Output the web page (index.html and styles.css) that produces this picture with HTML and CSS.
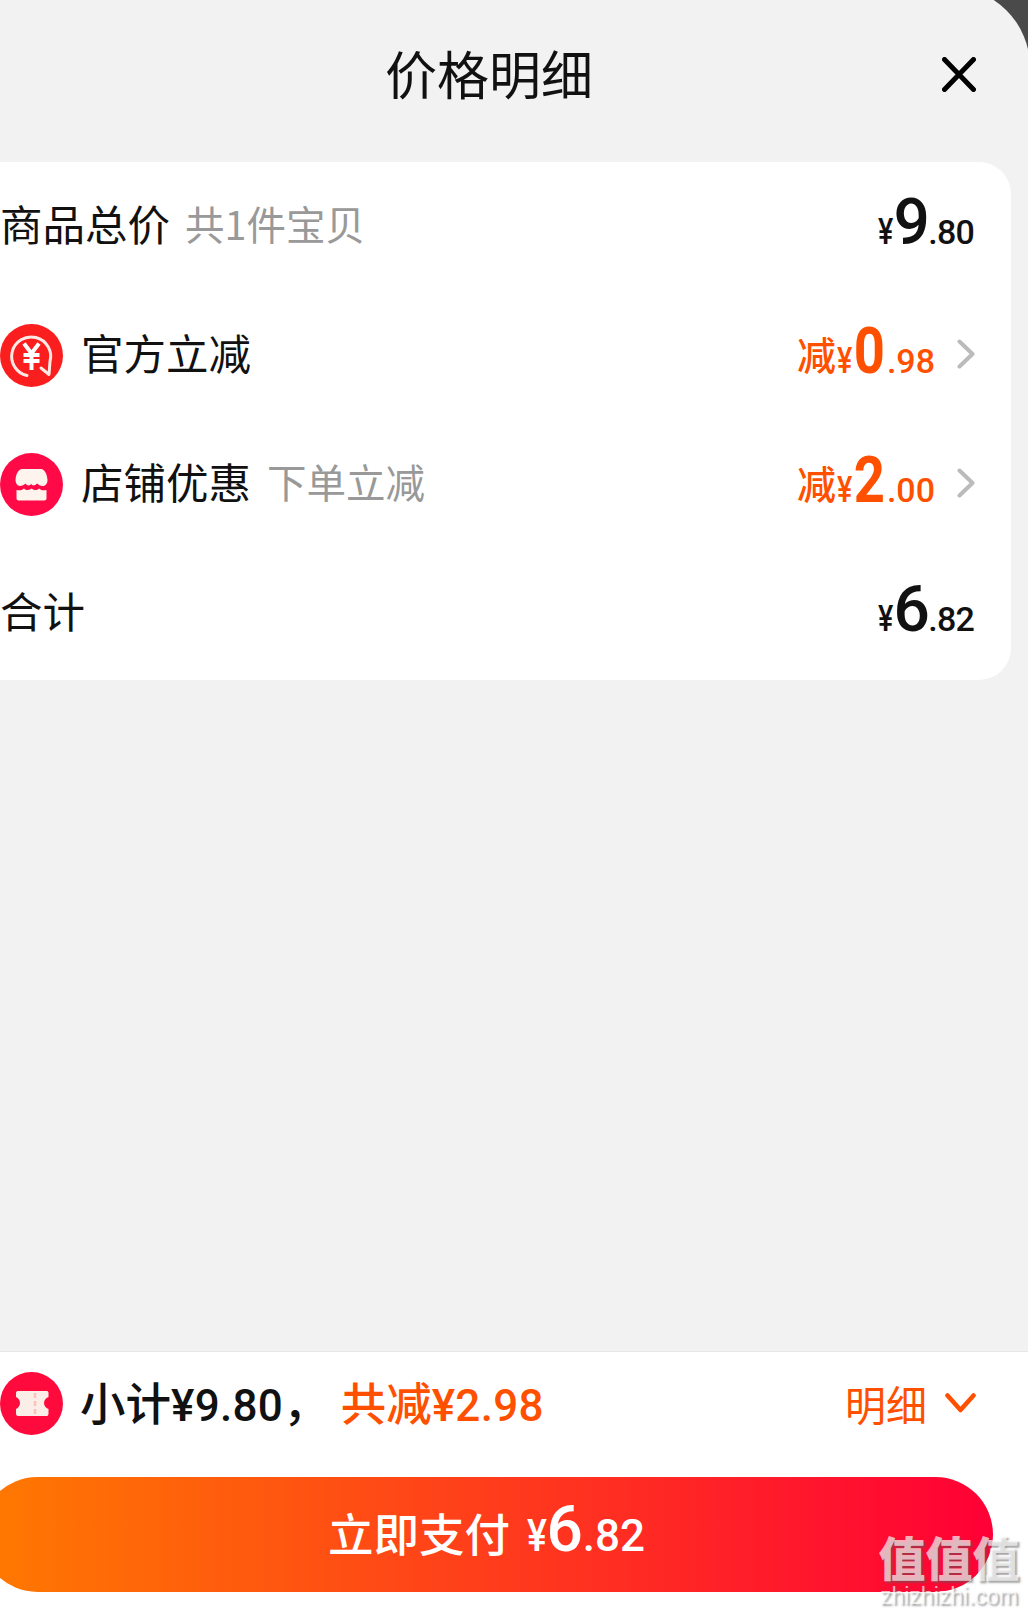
FILE: index.html
```html
<!DOCTYPE html>
<html lang="zh-CN">
<head>
<meta charset="utf-8">
<title>价格明细</title>
<link rel="stylesheet" href="styles.css">
</head>
<body>
<div class="sheet">
  <header class="header">
    <span></span>
    <h1 class="title">价格明细</h1>
    <svg class="close" viewBox="0 0 34 35"><path d="M2.5 2.5 31.5 32.5M31.5 2.5 2.5 32.5"/></svg>
  </header>

  <section class="card">
    <div class="row">
      <div class="label"><span class="name">商品总价</span><span class="hint">共1件宝贝</span></div>
      <div class="price price-plain"><span class="yen">¥</span><span class="big">9</span><span class="small">.80</span></div>
    </div>
    <div class="row">
      <div class="label">
        <svg class="badge" viewBox="0 0 63 63"><circle cx="31.5" cy="31.5" r="31.5" fill="#fa1e1e"/><path class="ic-line" d="M27 51.5A19.5 19.5 0 1 1 50 37.5L49 50.5 41 44"/><path class="ic-yen" d="M24 19.5 31.5 29.5 39 19.5M23.5 31H39.5M23.5 37H39.5M31.5 29.5V46"/></svg>
        <span class="name">官方立减</span>
      </div>
      <div class="right">
        <div class="price price-off"><span class="off">减</span><span class="yen">¥</span><span class="big">0</span><span class="small">.98</span></div>
        <svg class="chev" viewBox="0 0 18 30"><path d="M2.5 2.5 15.5 15 2.5 27.5"/></svg>
      </div>
    </div>
    <div class="row">
      <div class="label">
        <svg class="badge" viewBox="0 0 63 63"><circle cx="31.5" cy="31.5" r="31.5" fill="#ff0a46"/><path fill="#fff3ee" d="M22 16H41C44 16 47 20 47.500 27 47.500 31 45 33 42.500 33 40 33 38.500 31.500 37 30.500 35 33 32 33 31.500 31 29.500 33 27 33 25.500 30.500 24 32 22 33 20 33 17.500 33 15.500 30 15.500 27 16 20 19 16 22 16Z"/><path fill="#fff3ee" d="M16.500 37C19 37.500 22 37.500 24 35.500 26 37.500 29 37.500 31.500 35.500 34 37.500 37 37.500 39 35.500 41 37.500 44 37.500 46.500 37V45.500C46.500 46.500 45.500 47.500 44.500 47.500H18.500C17.500 47.500 16.500 46.500 16.500 45.500Z"/></svg>
        <span class="name">店铺优惠</span><span class="hint hint-wide">下单立减</span>
      </div>
      <div class="right">
        <div class="price price-off"><span class="off">减</span><span class="yen">¥</span><span class="big">2</span><span class="small">.00</span></div>
        <svg class="chev" viewBox="0 0 18 30"><path d="M2.5 2.500 15.500 15 2.500 27.500"/></svg>
      </div>
    </div>
    <div class="row">
      <div class="label"><span class="name">合计</span></div>
      <div class="price price-plain"><span class="yen">¥</span><span class="big">6</span><span class="small">.82</span></div>
    </div>
  </section>

  <div class="spacer"></div>

  <footer class="footer">
    <div class="summary">
      <div class="label">
        <svg class="badge badge-sum" viewBox="0 0 63 63"><circle cx="31.5" cy="31.5" r="31.5" fill="#ff0a3c"/><path fill="#fbeee8" d="M18 19H47C48 19 48.500 20 48.500 21V25C45.500 26 44 28.500 44 31 44 33.500 45.500 36 48.500 37V41C48.500 43 48 44 47 44H18C16.500 44 16 43 16 41V37C18.500 36 20 33.500 20 31 20 28.500 18.500 26 16 25V21C16 20 16.500 19 18 19Z"/><path class="ic-dash" d="M35 21V42"/></svg>
        <span class="sum-text">小计<span class="num">¥9.80</span>，</span>
        <span class="sum-off">共减<span class="num">¥2.98</span></span>
      </div>
      <div class="detail">
        <span>明细</span>
        <svg class="down" viewBox="0 0 31 20"><path d="M2.500 2.500 15.500 17 28.500 2.500"/></svg>
      </div>
    </div>
    <button class="pay" type="button"><span class="pay-label">立即支付</span><span class="pay-price"><span class="yen">¥</span><span class="big">6</span><span class="small">.82</span></span></button>
  </footer>

  <div class="mark">
    <div class="mark-cn">值值值</div>
    <div class="mark-en">zhizhizhi.com</div>
  </div>
</div>
</body>
</html>
```
FILE: styles.css
```css
html, body {
  margin: 0;
  height: 1614px;
  overflow: hidden;
  background: #4a4a4a;
}
body {
  font-family: "Noto Sans CJK SC", "Liberation Sans", sans-serif;
  color: #111;
}
.sheet {
  position: relative;
  box-sizing: border-box;
  width: 1082px;
  height: 1627px;
  margin: -13px 0 0 -52px;
  display: flex;
  flex-direction: column;
  background: #f2f2f2;
  border-top-right-radius: 80px;
  overflow: hidden;
}
.header {
  box-sizing: border-box;
  height: 175px;
  padding: 56px 54px 0;
  display: grid;
  grid-template-columns: 1fr auto 1fr;
  align-items: start;
}
.title {
  margin: 0;
  font-size: 52px;
  line-height: 60px;
  font-weight: 400;
  white-space: nowrap;
}
.close {
  justify-self: end;
  width: 34px;
  height: 35px;
  margin-top: 14px;
  fill: none;
  stroke: #000;
  stroke-width: 5;
  stroke-linecap: round;
}
.card {
  box-sizing: border-box;
  height: 518px;
  margin: 0 19px;
  padding: 0 36px 2px 33px;
  background: #fff;
  border-radius: 32px;
}
.row {
  height: 129px;
  display: flex;
  align-items: center;
  justify-content: space-between;
}
.label, .right {
  display: flex;
  align-items: center;
}
.badge {
  width: 63px;
  height: 63px;
  margin-right: 18px;
  flex: none;
}
.badge-sum {
  margin-right: 17px;
}
.ic-line {
  fill: none;
  stroke: #ffe9e4;
  stroke-width: 3;
  stroke-linecap: round;
  stroke-linejoin: round;
}
.ic-yen {
  fill: none;
  stroke: #fff;
  stroke-width: 4;
}
.ic-dash {
  fill: none;
  stroke: #fbc4b8;
  stroke-width: 2.500;
  stroke-dasharray: 5 3;
}
.name {
  padding-bottom: 7px;
  font-size: 42.500px;
  line-height: 60px;
}
.hint {
  margin-left: 15px;
  padding-bottom: 7px;
  font-size: 39.500px;
  line-height: 60px;
  color: #999;
}
.hint-wide {
  margin-left: 16px;
}
.price {
  padding-top: 9px;
  font-family: "Roboto", "Noto Sans CJK SC", sans-serif;
  line-height: 64px;
  white-space: nowrap;
}
.price span, .pay-price span {
  display: inline-block;
}
.price .yen {
  margin-right: -4px;
  font-size: 36px;
  font-weight: 500;
  transform: scaleX(0.8);
  transform-origin: left bottom;
}
.price .big {
  font-size: 64px;
  font-weight: 500;
  letter-spacing: -1.500px;
}
.price .small {
  font-size: 34px;
  font-weight: 500;
}
.price-plain {
  margin-right: 1px;
}
.price-plain .small {
  letter-spacing: -0.800px;
}
.price-off {
  color: #ff5000;
}
.price-off .yen {
  margin-left: 1px;
}
.price-off .big {
  margin: 0 -1px;
  font-weight: 700;
  letter-spacing: 0;
  transform: scaleX(0.85);
}
.price-off .off {
  font-family: "Noto Sans CJK SC", sans-serif;
  font-size: 39px;
  line-height: 40px;
  font-weight: 500;
  vertical-align: 3px;
}
.chev {
  width: 18px;
  height: 30px;
  margin: 0 0 3px 22px;
  fill: none;
  stroke: #bbb;
  stroke-width: 4;
  stroke-linecap: round;
  stroke-linejoin: round;
}
.spacer {
  flex: 1;
}
.footer {
  box-sizing: border-box;
  height: 263px;
  padding: 0 37px 22px 32px;
  background: #fff;
  border-top: 1px solid #e6e6e6;
}
.summary {
  height: 102px;
  margin: 0 17px 23px 20px;
  display: flex;
  align-items: center;
  justify-content: space-between;
}
.sum-text, .sum-off {
  font-size: 45.500px;
  line-height: 60px;
  font-weight: 500;
  white-space: nowrap;
}
.sum-off {
  margin-left: 12px;
  color: #ff5000;
}
.num {
  font-family: "Roboto", sans-serif;
  font-size: 44px;
  letter-spacing: 0.300px;
}
.detail {
  display: flex;
  align-items: center;
  font-size: 41px;
  line-height: 60px;
  color: #ff5000;
}
.down {
  width: 31px;
  height: 20px;
  margin-left: 18px;
  fill: none;
  stroke: #ff5000;
  stroke-width: 4.500;
  stroke-linecap: round;
  stroke-linejoin: round;
}
.pay {
  display: flex;
  align-items: center;
  justify-content: center;
  width: 1013px;
  height: 115px;
  padding: 0 0 6px;
  border: 0;
  border-radius: 58px;
  background: linear-gradient(90deg, #ff7a00, #ff0036);
  color: #fff;
  font-family: "Noto Sans CJK SC", sans-serif;
}
.pay-label {
  margin-right: 17px;
  font-size: 45.500px;
  font-weight: 500;
}
.pay-price {
  padding-top: 14px;
  font-family: "Roboto", sans-serif;
  font-weight: 500;
  line-height: 64px;
  white-space: nowrap;
}
.pay-price .yen {
  margin-right: -4px;
  font-size: 44px;
  transform: scaleX(0.85);
  transform-origin: left bottom;
}
.pay-price .big {
  font-size: 64px;
}
.pay-price .small {
  font-size: 44px;
}
.mark {
  position: absolute;
  left: 930px;
  top: 1543px;
  width: 142px;
  color: rgba(255, 255, 255, 0.68);
  text-align: center;
  text-shadow: 2px 2px 2px rgba(90, 90, 90, 0.55);
}
.mark-cn {
  font-size: 47px;
  line-height: 52px;
  font-weight: 900;
  white-space: nowrap;
}
.mark-en {
  margin-top: 3px;
  font-family: "Liberation Sans", sans-serif;
  font-size: 23px;
  line-height: 22px;
  white-space: nowrap;
}
```
